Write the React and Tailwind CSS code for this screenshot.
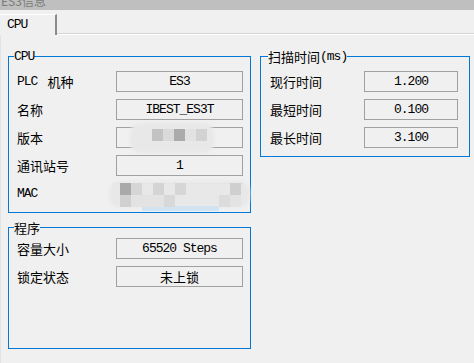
import React from "react";

const cjk = "font-['Noto_Sans_CJK_SC',sans-serif] text-[13px]";
const latin = "font-['Liberation_Mono','Noto_Sans_CJK_SC',monospace] text-[13px] tracking-[-1px]";

function Mosaic({ blob, cells, strip }) {
  return (
    <>
      <div
        className="absolute rounded-[10px] bg-[#e8e8e8] blur-[1.5px]"
        style={{ left: blob[0], top: blob[1], width: blob[2], height: blob[3] }}
      />
      {strip && (
        <div
          className="absolute bg-[#d2e3f2]"
          style={{ left: strip[0], top: strip[1], width: strip[2], height: strip[3] }}
        />
      )}
      {cells.map(([x, y, w, h, c], i) => (
        <div key={i} className="absolute" style={{ left: x, top: y, width: w, height: h, background: c }} />
      ))}
    </>
  );
}

function ValueBox({ children, width = "w-[127px]", cn = latin, mosaic }) {
  return (
    <div
      className={`relative ${width} h-[21px] border border-[#a0a0a0] flex items-center justify-center text-black ${cn}`}
    >
      {children}
      {mosaic}
    </div>
  );
}

function Row({ label, children }) {
  return (
    <div className="flex items-center h-[21px] pl-[3px]">
      <div className="w-[99px] flex items-center text-black">{label}</div>
      {children}
    </div>
  );
}

function Legend({ children }) {
  return <legend className="h-[14px] flex items-center px-0 leading-none">{children}</legend>;
}

export default function App() {
  return (
    <div className={`w-[474px] h-[363px] bg-[#f0f0f0] overflow-hidden ${cjk}`}>
      {/* title bar (cut off) */}
      <div className="h-[10px] bg-[#bfbfbf] overflow-hidden">
        <div className="-mt-[6px] pl-[1px] text-[12px] leading-[14px] text-[#7a7a7a]">ES3信息</div>
      </div>

      {/* tab strip */}
      <div className="h-[25px] flex items-end">
        <div className="w-[57px] h-[21px] border-t border-white border-r-2 border-r-[#8c8c8c] pl-[7px] flex items-center">
          <span className={latin}>CPU</span>
        </div>
        <div className="flex-1 h-full border-b border-white shadow-[inset_0_-1px_0_#d6d6d6]" />
      </div>

      <div className="flex gap-[9px] pl-[7px] pt-[14px] border-l border-[#e2e2e2] h-full">
        {/* left column */}
        <div className="w-[243px] flex flex-col">
          <fieldset className="border border-[#0078d7] pl-[5px] pr-[5px] pb-[8px]">
            <Legend>
              <span className={latin}>CPU</span>
            </Legend>
            <div className="flex flex-col gap-[7px] mt-[8px]">
              <Row
                label={
                  <>
                    <span className={latin}>PLC</span>
                    <span className="ml-[10px]">机种</span>
                  </>
                }
              >
                <ValueBox>ES3</ValueBox>
              </Row>
              <Row label="名称">
                <ValueBox>IBEST_ES3T</ValueBox>
              </Row>
              <Row label="版本">
                <ValueBox
                  mosaic={
                    <Mosaic
                      blob={[13, -5, 84, 30]}
                      cells={[
                        [35, 1, 11, 12, "#c3c3c3"],
                        [46, 1, 11, 12, "#dadada"],
                        [57, 1, 11, 12, "#ababab"],
                        [68, 1, 11, 12, "#e2e2e2"],
                        [79, 1, 11, 12, "#d2d2d2"],
                      ]}
                    />
                  }
                />
              </Row>
              <Row label="通讯站号">
                <ValueBox>1</ValueBox>
              </Row>
              <Row label={<span className={latin}>MAC</span>}>
                <ValueBox
                  mosaic={
                    <Mosaic
                      blob={[-8, -3, 141, 26]}
                      strip={[25, 22, 77, 5]}
                      cells={[
                        [3, -1, 11, 12, "#a9a9a9"],
                        [14, -1, 11, 12, "#d6d6d6"],
                        [36, -1, 11, 12, "#d4d4d4"],
                        [58, -1, 11, 12, "#d6d6d6"],
                        [113, -1, 11, 12, "#cfcfcf"],
                        [3, 11, 11, 12, "#d0d0d0"],
                        [14, 11, 33, 12, "#e3e3e3"],
                        [47, 11, 11, 12, "#d8d8d8"],
                        [102, 11, 11, 12, "#dcdcdc"],
                        [113, 11, 11, 12, "#e3e3e3"],
                      ]}
                    />
                  }
                />
              </Row>
            </div>
          </fieldset>

          <fieldset className="mt-[7px] h-[129px] border border-[#0078d7] pl-[5px] pr-[5px]">
            <Legend>程序</Legend>
            <div className="flex flex-col gap-[7px] mt-[4px]">
              <Row label="容量大小">
                <ValueBox>65520 Steps</ValueBox>
              </Row>
              <Row label="锁定状态">
                <ValueBox cn={cjk}>未上锁</ValueBox>
              </Row>
            </div>
          </fieldset>
        </div>

        {/* right column */}
        <div className="w-[210px]">
          <fieldset className="border border-[#0078d7] pl-[7px] pr-[11px] pb-[8px]">
            <Legend>
              扫描时间<span className={latin}>(ms)</span>
            </Legend>
            <div className="flex flex-col gap-[7px] mt-[8px]">
              {[
                ["现行时间", "1.200"],
                ["最短时间", "0.100"],
                ["最长时间", "3.100"],
              ].map(([l, v]) => (
                <div key={l} className="flex items-center justify-between h-[21px] pl-[2px]">
                  <span>{l}</span>
                  <ValueBox width="w-[94px]">{v}</ValueBox>
                </div>
              ))}
            </div>
          </fieldset>
        </div>
      </div>
    </div>
  );
}
